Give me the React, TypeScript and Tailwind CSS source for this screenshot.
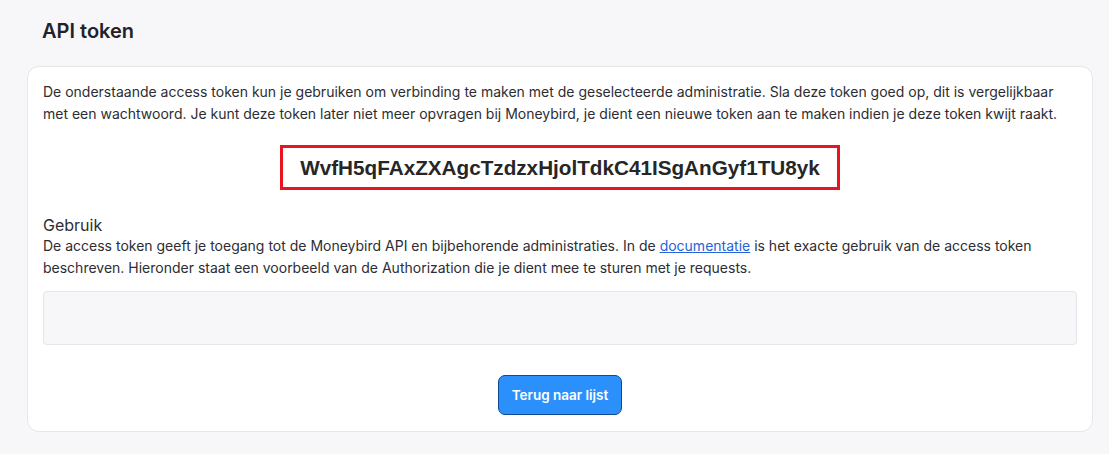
import React from 'react';

const TOKEN = 'WvfH5qFAxZXAgcTzdzxHjolTdkC41ISgAnGyf1TU8yk';

const ApiToken: React.FC = () => {
  return (
    <div
      className="min-h-screen bg-[#f7f7f9] pl-[27px] pr-[16px] pt-[17px] pb-[22px] text-[#2d2d33]"
      style={{ fontFamily: 'Inter, "Noto Sans", sans-serif' }}
    >
      {/* Title */}
      <h1 className="pl-[15px] text-[20px] leading-[28px] font-semibold text-[#222228]">API token</h1>

      {/* Card */}
      <div className="mt-[21px] rounded-[12px] border border-[#e6e6ea] bg-white px-[15px] pt-[14px] pb-[16px]">
        <p className="text-[14px] leading-[22px]">
          De onderstaande access token kun je gebruiken om verbinding te maken met de geselecteerde administratie. Sla deze token goed op, dit is vergelijkbaar met een wachtwoord. Je kunt deze token later niet meer opvragen bij Moneybird, je dient een nieuwe token aan te maken indien je deze token kwijt raakt.
        </p>

        {/* Token */}
        <div className="mt-[20px] flex justify-center">
          <div className="flex h-[45px] w-[560px] items-center justify-center border-[3px] border-[#e8141f] bg-white">
            <span
              className="text-[20.7px] font-bold text-[#262626]"
              style={{ fontFamily: '"Liberation Sans", Arial, sans-serif' }}
            >
              {TOKEN}
            </span>
          </div>
        </div>

        {/* Usage */}
        <h2 className="mt-[25px] text-[16px] leading-[20px] text-[#2d2d33]">Gebruik</h2>
        <p className="text-[14px] leading-[22px]">
          De access token geeft je toegang tot de Moneybird API en bijbehorende administraties. In de{' '}
          <a href="#" className="text-[#2563d9] underline">documentatie</a> is het exacte gebruik van de access token beschreven. Hieronder staat een voorbeeld van de Authorization die je dient mee te sturen met je requests.
        </p>

        <div className="mt-[12px] h-[54px] rounded-[4px] border border-[#e6e6ea] bg-[#f7f7f9]" />

        {/* Button */}
        <div className="mt-[30px] flex justify-center">
          <button
            className="h-[40px] rounded-[7px] border border-[#0f4a94] bg-[#2b8ffc] px-[13px] text-[13.5px] font-semibold text-white"
            style={{ fontFamily: 'Inter, "Noto Sans", sans-serif' }}
          >
            Terug naar lijst
          </button>
        </div>
      </div>
    </div>
  );
};

export default function App() {
  return <ApiToken />;
}
